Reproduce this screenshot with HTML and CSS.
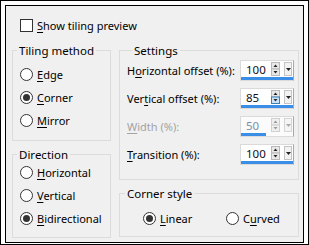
FILE: index.html
```html
<!DOCTYPE html>
<html lang="en">
<head>
    <meta charset="UTF-8">
    <title>Tiling</title>
    <link rel="stylesheet" href="styles.css">
</head>
<body>
    <div class="frame">
        <div class="dialog">
            <!-- Preview toggle -->
            <div class="check"><span class="box"></span><span><u>S</u>how tiling preview</span></div>

            <div class="cols">
                <div class="col">
                    <fieldset class="group tiling">
                        <legend>Tiling method</legend>
                        <div class="radio"><span class="dot"></span><span><u>E</u>dge</span></div>
                        <div class="radio"><span class="dot on"></span><span><u>C</u>orner</span></div>
                        <div class="radio"><span class="dot"></span><span><u>M</u>irror</span></div>
                    </fieldset>
                    <fieldset class="group direction">
                        <legend>Direction</legend>
                        <div class="radio"><span class="dot"></span><span><u>H</u>orizontal</span></div>
                        <div class="radio"><span class="dot"></span><span><u>V</u>ertical</span></div>
                        <div class="radio"><span class="dot on"></span><span><u>B</u>idirectional</span></div>
                    </fieldset>
                </div>

                <div class="col">
                    <fieldset class="group settings">
                        <legend>Settings</legend>
                        <div class="field">
                            <span>H<u>o</u>rizontal offset (%):</span>
                            <div class="spin"><span class="val">100</span>
                                <svg class="btns" width="22" height="15" viewBox="0 0 22 15">
                                    <rect x="0.5" y="0.5" width="8" height="6.5" fill="#e8e8e8" stroke="#b9b9b9"/>
                                    <rect x="0.5" y="7" width="8" height="6.5" fill="#e8e8e8" stroke="#b9b9b9"/>
                                    <polygon points="2.5,5 4.5,2.5 6.5,5" fill="#222"/>
                                    <polygon points="2.5,9 6.5,9 4.5,11.5" fill="#222"/>
                                    <rect x="13.5" y="0.5" width="7" height="13" fill="#f2f2f2" stroke="#c4c4c4"/>
                                    <polygon points="15,6 20,6 17.5,9" fill="#222"/>
                                </svg>
                            </div>
                        </div>
                        <div class="field">
                            <span>Ver<u>t</u>ical offset (%):</span>
                            <div class="spin"><span class="val">85</span>
                                <svg class="btns" width="22" height="15" viewBox="0 0 22 15">
                                    <rect x="0.5" y="0.5" width="8" height="6.5" fill="#e8e8e8" stroke="#b9b9b9"/>
                                    <rect x="0.5" y="7" width="8" height="6.5" fill="#cce4f7" stroke="#3c7fb1"/>
                                    <polygon points="2.5,5 4.5,2.5 6.5,5" fill="#222"/>
                                    <polygon points="2.5,9 6.5,9 4.5,11.5" fill="#222"/>
                                    <rect x="13.5" y="0.5" width="7" height="13" fill="#f2f2f2" stroke="#c4c4c4"/>
                                    <polygon points="15,6 20,6 17.5,9" fill="#222"/>
                                </svg>
                            </div>
                        </div>
                        <div class="field off">
                            <span><u>W</u>idth (%):</span>
                            <div class="spin"><span class="val">50</span>
                                <svg class="btns" width="22" height="15" viewBox="0 0 22 15">
                                    <rect x="0.5" y="0.5" width="8" height="6.5" fill="#efefef" stroke="#d0d0d0"/>
                                    <rect x="0.5" y="7" width="8" height="6.5" fill="#efefef" stroke="#d0d0d0"/>
                                    <polygon points="2.5,5 4.5,2.5 6.5,5" fill="#999"/>
                                    <polygon points="2.5,9 6.5,9 4.5,11.5" fill="#999"/>
                                    <rect x="13.5" y="0.5" width="7" height="13" fill="#f4f4f4" stroke="#d4d4d4"/>
                                    <polygon points="15,6 20,6 17.5,9" fill="#aaa"/>
                                </svg>
                            </div>
                        </div>
                        <div class="field">
                            <span><u>T</u>ransition (%):</span>
                            <div class="spin"><span class="val">100</span>
                                <svg class="btns" width="22" height="15" viewBox="0 0 22 15">
                                    <rect x="0.5" y="0.5" width="8" height="6.5" fill="#e8e8e8" stroke="#b9b9b9"/>
                                    <rect x="0.5" y="7" width="8" height="6.5" fill="#e8e8e8" stroke="#b9b9b9"/>
                                    <polygon points="2.5,5 4.5,2.5 6.5,5" fill="#222"/>
                                    <polygon points="2.5,9 6.5,9 4.5,11.5" fill="#222"/>
                                    <rect x="13.5" y="0.5" width="7" height="13" fill="#f2f2f2" stroke="#c4c4c4"/>
                                    <polygon points="15,6 20,6 17.5,9" fill="#222"/>
                                </svg>
                            </div>
                        </div>
                    </fieldset>
                    <fieldset class="group corner">
                        <legend>Corner style</legend>
                        <div class="radio-row">
                            <div class="radio"><span class="dot on"></span><span><u>L</u>inear</span></div>
                            <div class="radio"><span class="dot"></span><span>C<u>u</u>rved</span></div>
                        </div>
                    </fieldset>
                </div>
            </div>
        </div>
    </div>
</body>
</html>
```

FILE: styles.css
```css
/* Dialog shell */
body {
    margin: 0;
    background: #fff;
    font-family: "Noto Sans", "Open Sans", sans-serif;
    font-size: 11px;
    color: #000;
}
u {
    text-decoration-thickness: 1px;
    text-underline-offset: 2px;
}
.frame {
    width: 309px;
    height: 245px;
    box-sizing: border-box;
    border: 1px solid #000;
    padding: 4px 4px 1px 4px;
}
.dialog {
    height: 100%;
    box-sizing: border-box;
    border: 1px solid #000;
    background: #f0f0f0;
    padding: 12px 4px 4px 6px;
}

/* Checkbox row */
.check {
    display: flex;
    align-items: center;
    height: 15px;
    margin: 0 0 10px 8px;
    white-space: nowrap;
}
.box {
    width: 13px;
    height: 13px;
    box-sizing: border-box;
    border: 1px solid #333;
    background: #fff;
    margin-right: 4px;
}

/* Columns of group boxes */
.cols {
    display: flex;
    gap: 8px;
}
.col {
    display: flex;
    flex-direction: column;
    gap: 6px;
}
.col:first-child {
    width: 99px;
}
.col:last-child {
    width: 180px;
}
.group {
    margin: 0;
    padding: 0;
    min-width: 0;
    border: 1px solid #dcdcdc;
}
.group legend {
    padding: 0 2px;
    margin-left: 4px;
    line-height: 15px;
    font-size: 11.5px;
}
.settings legend, .corner legend {
    margin-left: 5px;
}

/* Radio buttons */
.radio {
    display: flex;
    align-items: center;
    height: 23px;
    padding-left: 7px;
    white-space: nowrap;
}
.dot {
    position: relative;
    width: 13px;
    height: 13px;
    box-sizing: border-box;
    border: 1px solid #333;
    border-radius: 50%;
    background: #fff;
    margin-right: 4px;
}
.dot.on::after {
    content: "";
    position: absolute;
    left: 2px;
    top: 2px;
    width: 7px;
    height: 7px;
    border-radius: 50%;
    background: #333;
}
.tiling {
    padding: 5px 0 8px;
}
.direction {
    padding: 0 0 7px;
}
.direction .radio:first-of-type {
    margin-top: -1px;
}
.corner {
    padding: 6px 0 6px;
}
.radio-row {
    display: grid;
    grid-template-columns: 83px auto;
    padding-left: 16px;
}

/* Settings rows with spin boxes */
.settings {
    padding: 2px 4px 14px 7px;
    display: flex;
    flex-direction: column;
    gap: 7px;
}
.field {
    display: flex;
    align-items: center;
    justify-content: space-between;
    height: 21px;
    white-space: nowrap;
}
.field.off > span {
    color: #a3a3a3;
}
.spin {
    display: flex;
    align-items: flex-start;
    width: 54px;
    height: 21px;
    box-sizing: border-box;
    background: #fff;
    border: 1px solid #dadada;
    border-right: 1px solid #a8a8a8;
    box-shadow: inset 0 -3px 0 #3a8ee6;
}
.val {
    width: 25px;
    margin-right: 5px;
    padding-left: 5px;
    box-sizing: border-box;
    height: 18px;
    line-height: 18px;
    font-size: 11.5px;
    color: #101020;
}
.btns {
    margin-top: 1px;
}
.off .spin {
    background: #fbfbfb;
    box-shadow: none;
}
.off .val {
    color: #7d8fa8;
    box-shadow: inset 0 -3px 0 #3a8ee6;
    height: 19px;
}
```
